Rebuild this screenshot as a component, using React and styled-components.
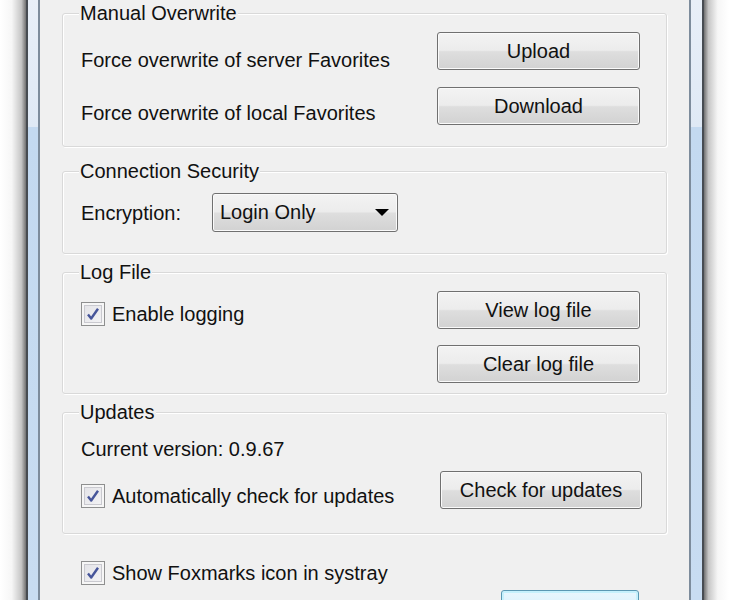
import React from 'react';
import styled, { createGlobalStyle } from 'styled-components';

const GlobalStyle = createGlobalStyle`
  html, body {
    margin: 0;
    padding: 0;
    background: #fff;
  }
  body {
    font-family: "Liberation Sans", Arial, sans-serif;
    color: #111;
  }
`;

const Screen = styled.div`
  display: flex;
  width: 729px;
  height: 600px;
  overflow: hidden;
`;

const Shade = styled.div`
  flex: none;
  width: ${(p) => p.$w}px;
  background: linear-gradient(
    to ${(p) => (p.$side === 'left' ? 'right' : 'left')},
    #ffffff 0%,
    #f6f6f6 45%,
    #c6c6c6 82%,
    #727272 100%
  );
`;

const Frame = styled.div`
  flex: none;
  box-sizing: border-box;
  width: ${(p) => p.$w}px;
  border-left: 2px solid ${(p) => (p.$side === 'left' ? '#474c52' : '#7d8c9c')};
  border-right: 2px solid ${(p) => (p.$side === 'left' ? '#7d8c9c' : '#474c52')};
  background: linear-gradient(
    to bottom,
    #e8eff8 0,
    #dfe9f5 127px,
    #c3d9f0 127px,
    #c8dcf1 100%
  );
`;

const Content = styled.div`
  flex: none;
  width: 649px;
  box-sizing: border-box;
  padding: 0 22px;
  background: #f0f0f0;
  display: flex;
  flex-direction: column;
`;

const GroupBox = styled.fieldset`
  margin: ${(p) => p.$top}px 0 0;
  padding: ${(p) => p.$pt}px 26px ${(p) => p.$pb}px 18px;
  min-width: 0;
  border: 1px solid #d9d9d9;
  border-radius: 3px;
  box-shadow: 1px 1px 0 #fff, inset 1px 1px 0 #fff;
`;

const Legend = styled.legend`
  margin-left: -2px;
  padding: 0 1px;
  font-size: 20px;
  line-height: 24px;
  background: #f0f0f0;
`;

const Row = styled.div`
  display: flex;
  align-items: flex-start;
  justify-content: ${(p) => (p.$start ? 'flex-start' : 'space-between')};
  margin-top: ${(p) => p.$gap || 0}px;
`;

const Text = styled.span`
  font-size: 20px;
  line-height: 24px;
  margin-top: ${(p) => p.$dy || 0}px;
  white-space: nowrap;
`;

const FieldLabel = styled(Text)`
  width: 131px;
  margin-top: 8px;
`;

const Button = styled.button`
  flex: none;
  width: ${(p) => p.$w || 203}px;
  height: 38px;
  margin-right: ${(p) => p.$mr || 0}px;
  padding: 0;
  font-family: inherit;
  font-size: 20px;
  color: #111;
  border: 1px solid #707070;
  border-radius: 3px;
  background: linear-gradient(to bottom, #f3f3f3 0%, #ececec 48%, #dedede 52%, #d2d2d2 100%);
  box-shadow: inset 0 0 0 1px #fafafa;
`;

const ButtonStack = styled.div`
  display: flex;
  flex-direction: column;
  gap: 16px;
`;

const Select = styled.div`
  flex: none;
  width: 186px;
  height: 39px;
  box-sizing: border-box;
  display: flex;
  align-items: center;
  justify-content: space-between;
  padding: 0 8px 0 7px;
  font-size: 20px;
  border: 1px solid #707070;
  border-radius: 3px;
  background: linear-gradient(to bottom, #f3f3f3 0%, #ececec 48%, #dedede 52%, #d2d2d2 100%);
  box-shadow: inset 0 0 0 1px #fafafa;
`;

const Caret = styled.span`
  width: 0;
  height: 0;
  border-left: 7px solid transparent;
  border-right: 7px solid transparent;
  border-top: 7px solid #000;
`;

const CheckLabel = styled.label`
  display: flex;
  align-items: center;
  gap: 7px;
  margin-top: ${(p) => p.$dy || 0}px;
  margin-left: ${(p) => p.$dx || 0}px;
  font-size: 20px;
  line-height: 24px;
  white-space: nowrap;
`;

const Box = styled.span`
  flex: none;
  width: 24px;
  height: 24px;
  box-sizing: border-box;
  margin-top: 1px;
  display: flex;
  align-items: center;
  justify-content: center;
  border: 1px solid #8e8f8f;
  background: linear-gradient(135deg, #e2e2e6 0%, #f4f4f6 100%);
  box-shadow: inset 0 0 0 2px #f6f6f6, inset 0 0 0 3px #c9c9cf;
`;

const Footer = styled.div`
  display: flex;
  justify-content: flex-end;
  margin-top: 5px;
  padding-right: 28px;
`;

const DefaultButton = styled.button`
  width: 138px;
  height: 38px;
  padding: 0;
  border: 1px solid #5b97b3;
  border-radius: 3px;
  background: linear-gradient(to bottom, #eaf6fd 0%, #d9f0fc 50%, #bee6fd 52%, #a7d9f5 100%);
  box-shadow: inset 0 0 0 2px #c6f0fc;
`;

const Check = () => (
  <Box>
    <svg width="14" height="14" viewBox="0 0 14 14">
      <path d="M2 7.5 L5.2 11.5 L12 1.8" fill="none" stroke="#46559a" strokeWidth="2.4" strokeLinejoin="round" />
    </svg>
  </Box>
);

export default function App() {
  return (
    <>
      <GlobalStyle />
      <Screen>
        <Shade $side="left" $w={26} />
        <Frame $side="left" $w={14} />
        <Content>
          <GroupBox $top={1} $pt={7} $pb={21}>
            <Legend>Manual Overwrite</Legend>
            <Row>
              <Text $dy={16}>Force overwrite of server Favorites</Text>
              <Button>Upload</Button>
            </Row>
            <Row $gap={15}>
              <Text $dy={14}>Force overwrite of local Favorites</Text>
              <Button>Download</Button>
            </Row>
          </GroupBox>

          <GroupBox $top={12} $pt={10} $pb={21}>
            <Legend>Connection Security</Legend>
            <Row $start>
              <FieldLabel>Encryption:</FieldLabel>
              <Select>
                <span>Login Only</span>
                <Caret />
              </Select>
            </Row>
          </GroupBox>

          <GroupBox $top={6} $pt={7} $pb={10}>
            <Legend>Log File</Legend>
            <Row>
              <CheckLabel $dy={10}>
                <Check />
                Enable logging
              </CheckLabel>
              <ButtonStack>
                <Button>View log file</Button>
                <Button>Clear log file</Button>
              </ButtonStack>
            </Row>
          </GroupBox>

          <GroupBox $top={6} $pt={13} $pb={24}>
            <Legend>Updates</Legend>
            <Text>Current version: 0.9.67</Text>
            <Row $gap={10}>
              <CheckLabel $dy={12}>
                <Check />
                Automatically check for updates
              </CheckLabel>
              <Button $w={202} $mr={-2}>Check for updates</Button>
            </Row>
          </GroupBox>

          <CheckLabel $dy={26} $dx={19}>
            <Check />
            Show Foxmarks icon in systray
          </CheckLabel>

          <Footer>
            <DefaultButton aria-label="OK" />
          </Footer>
        </Content>
        <Frame $side="right" $w={15} />
        <Shade $side="right" $w={25} />
      </Screen>
    </>
  );
}
